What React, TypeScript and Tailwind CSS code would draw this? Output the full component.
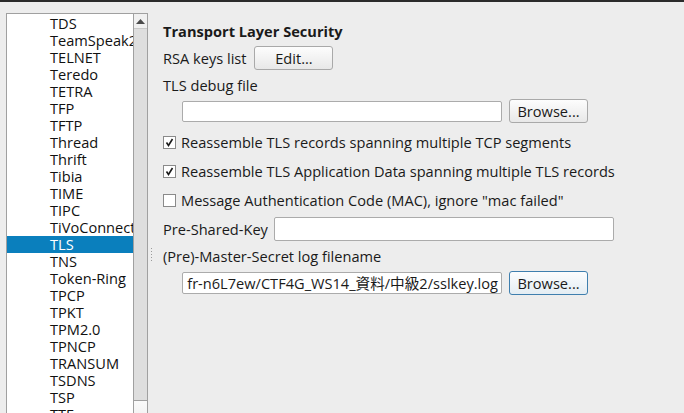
const protocols = [
  'TDS',
  'TeamSpeak2',
  'TELNET',
  'Teredo',
  'TETRA',
  'TFP',
  'TFTP',
  'Thread',
  'Thrift',
  'Tibia',
  'TIME',
  'TIPC',
  'TiVoConnect',
  'TLS',
  'TNS',
  'Token-Ring',
  'TPCP',
  'TPKT',
  'TPM2.0',
  'TPNCP',
  'TRANSUM',
  'TSDNS',
  'TSP',
  'TTF',
];

const Checkbox = ({ checked, label }: { checked: boolean; label: string }) => (
  <div className="flex items-center h-[18px]">
    <div className="w-[13px] h-[13px] border border-[#8a8a8a] bg-white flex items-center justify-center">
      {checked && (
        <svg width="9" height="9" viewBox="0 0 9 9">
          <path d="M1.5 4.5 L3.5 7.5 L7.5 1" fill="none" stroke="#1a1a1a" strokeWidth="1.6" />
        </svg>
      )}
    </div>
    <span className="ml-[5px] whitespace-nowrap">{label}</span>
  </div>
);

const Button = ({ label, width, focused }: { label: string; width: string; focused?: boolean }) => (
  <div
    className={`${width} h-[24px] rounded-[3px] border flex items-center justify-center ${
      focused
        ? 'border-[#3f7fae] bg-gradient-to-b from-[#fcfdfe] to-[#e4edf3]'
        : 'border-[#a9a9a9] bg-gradient-to-b from-[#fdfdfd] to-[#e8e8e8]'
    }`}
  >
    {label}
  </div>
);

export default function App() {
  return (
    <div
      className="w-[684px] h-[413px] overflow-hidden bg-[#ededed] border-t-2 border-[#2b2b2b] text-[14.6px] text-[#1a1a1a] leading-[17px] flex"
      style={{ fontFamily: '"Open Sans", "Noto Sans CJK JP", sans-serif' }}
    >
      {/* Protocol list */}
      <div className="pl-[6px] pt-[11px] shrink-0">
        <div className="w-[142px] h-[420px] border border-[#a0a0a0] bg-white flex">
          <div className="w-[126px] pt-[1px] overflow-hidden">
            {protocols.map((p) => (
              <div
                key={p}
                className={`h-[17px] pl-[43px] whitespace-nowrap ${
                  p === 'TLS' ? 'bg-[#0a7fbd] text-white' : 'text-[#111]'
                }`}
              >
                {p}
              </div>
            ))}
          </div>
          <div className="w-[14px] border-l border-[#a0a0a0] bg-[#dedede] flex flex-col">
            <div className="h-[15px] bg-[#f0f0f0] border-b border-[#c8c8c8] flex items-center justify-center">
              <svg width="9" height="5" viewBox="0 0 9 5">
                <path d="M0 5 L4.5 0 L9 5 Z" fill="#4a4a4a" />
              </svg>
            </div>
            <div className="h-[371px]" />
            <div className="flex-1 border-t border-[#a0a0a0] bg-gradient-to-b from-[#fafafa] to-[#ececec]" />
          </div>
        </div>
      </div>

      {/* Splitter */}
      <div className="w-[15px] shrink-0 flex flex-col pl-[3px] pt-[246px]">
        <div className="flex flex-col gap-[2px]">
          {[0, 1, 2, 3, 4].map((i) => (
            <div key={i} className="w-[1px] h-[1px] bg-[#9a9a9a]" />
          ))}
        </div>
      </div>

      {/* Settings */}
      <div className="pt-[20px] flex flex-col">
        <div className="h-[18px] flex items-center font-bold">Transport Layer Security</div>

        <div className="mt-[6px] h-[24px] flex items-center">
          <span>RSA keys list</span>
          <div className="ml-[8px]">
            <Button label="Edit..." width="w-[79px]" />
          </div>
        </div>

        <div className="mt-[6px] h-[18px] flex items-center">TLS debug file</div>

        <div className="mt-[5px] h-[24px] flex items-center pl-[19px]">
          <div className="w-[320px] h-[21px] bg-white border border-[#ababab] rounded-[2px]" />
          <div className="ml-[7px]">
            <Button label="Browse..." width="w-[79px]" />
          </div>
        </div>

        <div className="mt-[10px]">
          <Checkbox checked label="Reassemble TLS records spanning multiple TCP segments" />
        </div>
        <div className="mt-[11px]">
          <Checkbox checked label="Reassemble TLS Application Data spanning multiple TLS records" />
        </div>
        <div className="mt-[11px]">
          <Checkbox checked={false} label={'Message Authentication Code (MAC), ignore "mac failed"'} />
        </div>

        <div className="mt-[8px] h-[24px] flex items-center">
          <span>Pre-Shared-Key</span>
          <div className="ml-[6px] w-[340px] h-[24px] bg-white border border-[#ababab] rounded-[2px]" />
        </div>

        <div className="mt-[6px] h-[18px] flex items-center">(Pre)-Master-Secret log filename</div>

        <div className="mt-[6px] h-[24px] flex items-center pl-[19px]">
          <div className="w-[320px] h-[22px] bg-white border border-[#ababab] rounded-[2px] overflow-hidden flex justify-end items-center pr-[3px]">
            <span className="whitespace-nowrap shrink-0">fr-n6L7ew/CTF4G_WS14_資料/中級2/sslkey.log</span>
          </div>
          <div className="ml-[7px]">
            <Button label="Browse..." width="w-[79px]" focused />
          </div>
        </div>
      </div>
    </div>
  );
}
